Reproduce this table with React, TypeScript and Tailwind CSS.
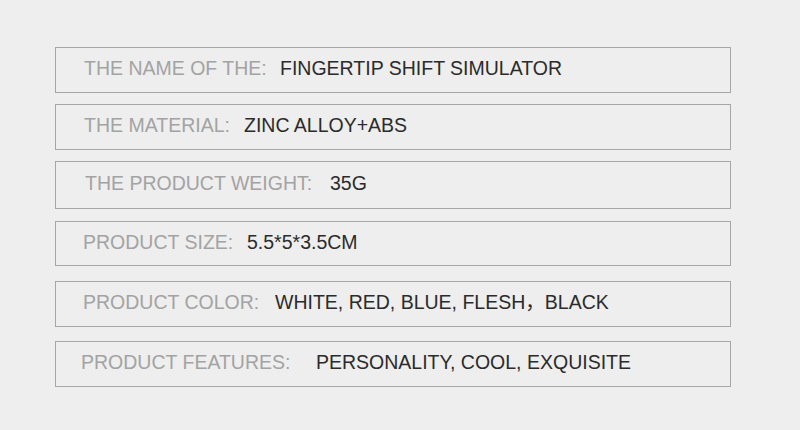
const ROWS = [
  { label: "THE NAME OF THE:",        value: "FINGERTIP SHIFT SIMULATOR",        box: "h-[46px]",            lw: "w-[196px]", pl: "pl-[28px]" },
  { label: "THE MATERIAL:",           value: "ZINC ALLOY+ABS",                   box: "h-[46px] mt-[11px]",  lw: "w-[160px]", pl: "pl-[28px]" },
  { label: "THE PRODUCT WEIGHT:",     value: "35G",                              box: "h-[48px] mt-[11px]",  lw: "w-[245px]", pl: "pl-[29px]" },
  { label: "PRODUCT SIZE:",           value: "5.5*5*3.5CM",                      box: "h-[45px] mt-[12px]",  lw: "w-[164px]", pl: "pl-[27px]" },
  { label: "PRODUCT COLOR:",          value: "WHITE, RED, BLUE, FLESH\uFF0CBLACK", box: "h-[46px] mt-[15px]",  lw: "w-[192px]", pl: "pl-[27px]" },
  { label: "PRODUCT FEATURES:",       value: "PERSONALITY, COOL, EXQUISITE",     box: "h-[46px] mt-[14px]",  lw: "w-[235px]", pl: "pl-[25px]" },
];

export default function App() {
  return (
    <div
      className="w-[800px] h-[430px] bg-[#eeeeee] overflow-hidden"
      style={{ fontFamily: '"Liberation Sans", Arial, "Noto Sans CJK SC", sans-serif' }}
    >
      <div className="flex flex-col w-[676px] ml-[55px] pt-[47px]">
        {ROWS.map((r) => (
          <div
            key={r.label}
            className={`flex items-center border border-[#a6a6a6] ${r.box} ${r.pl}`}
          >
            <span className={`${r.lw} shrink-0 text-[19.5px] leading-none text-[#a3a3a3] whitespace-nowrap -mt-[2px]`}>
              {r.label}
            </span>
            <span className="text-[19.5px] leading-none text-[#2b2b2b] whitespace-pre -mt-[2px]">
              {r.value}
            </span>
          </div>
        ))}
      </div>
    </div>
  );
}
